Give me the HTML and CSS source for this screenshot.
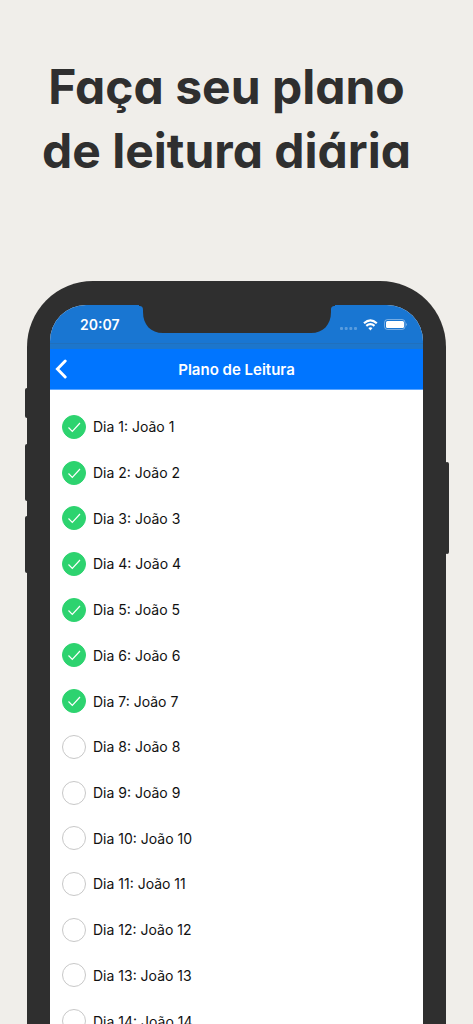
FILE: index.html
```html
<!DOCTYPE html>
<html lang="pt-BR">
<head>
<meta charset="utf-8">
<meta name="viewport" content="width=device-width, initial-scale=1">
<title>Plano de Leitura</title>
<link rel="stylesheet" href="styles.css">
</head>
<body>
<main class="page">
  <h1 class="headline">Faça seu plano<br>de leitura diária</h1>
  <section class="phone">
    <span class="key key-mute"></span>
    <span class="key key-up"></span>
    <span class="key key-down"></span>
    <span class="key key-power"></span>
    <div class="screen">
      <div class="status">
        <span class="time">20:07</span>
        <svg class="notch" viewBox="0 0 196 28" aria-hidden="true"><path d="M0 0H196V1C193 1 192 2 192 5V7C192 20 184 28 172 28H24C12 28 4 20 4 7V5C4 2 3 1 0 1Z" fill="#2f2f2f"/></svg>
        <svg class="signals" viewBox="0 0 68 12" aria-hidden="true">
          <g fill="#fff" fill-opacity=".28"><rect x="0" y="8" width="3" height="3" rx="1"/><rect x="4.700" y="8" width="3" height="3" rx="1"/><rect x="9.300" y="8" width="3" height="3" rx="1"/><rect x="14" y="8" width="3" height="3" rx="1"/></g>
          <g fill="none" stroke="#fff" stroke-width="2.200"><path d="M24 4.200Q30.400 -1.600 36.800 4.200"/><path d="M26.300 6.900Q30.400 3.300 34.500 6.900"/></g>
          <path d="M28.300 9.100Q30.400 7.400 32.500 9.100L30.400 11.400Z" fill="#fff"/>
          <rect x="44.500" y=".5" width="20.500" height="10" rx="3" fill="none" stroke="#fff" stroke-opacity=".4"/>
          <rect x="46" y="2" width="18" height="7" rx="1.500" fill="#fff"/>
          <path d="M66.200 3.800Q68 5.500 66.200 7.200Z" fill="#fff" fill-opacity=".5"/>
        </svg>
      </div>
      <header class="bar">
        <button class="back" type="button" aria-label="Voltar"><svg viewBox="0 0 12 20" aria-hidden="true"><path d="M10.200 2L2.400 10L10.200 18" fill="none" stroke="#fff" stroke-width="2.900" stroke-linecap="round"/></svg></button>
        <h2 class="title">Plano de Leitura</h2>
      </header>
      <ul class="days" id="days"></ul>
    </div>
  </section>
</main>
<script src="script.js"></script>
</body>
</html>
```
FILE: styles.css
```css
* { box-sizing: border-box; }

body {
  margin: 0;
  background: #f0eeea;
  font-family: Inter, "Liberation Sans", sans-serif;
}

.page {
  display: flex;
  flex-direction: column;
  height: 100vh;
  overflow: hidden;
}

.headline {
  flex: none;
  margin: 0;
  padding: 55px 20px 98px 0;
  color: #2f2f2f;
  font-family: "Comic Sans MS", Inter, sans-serif;
  font-feature-settings: "cv11";
  font-size: 48px;
  font-weight: 700;
  line-height: 64px;
  text-align: center;
  white-space: nowrap;
}

.phone {
  position: relative;
  flex: none;
  margin: 0 27px;
  padding: 24px 23px 0;
  border-radius: 66px 66px 0 0;
  background: #2f2f2f;
}

.key {
  position: absolute;
  left: -2px;
  width: 4px;
  border-radius: 2px;
  background: #2f2f2f;
}
.key-mute { top: 107px; height: 30px; }
.key-up { top: 163px; height: 57px; }
.key-down { top: 235px; height: 57px; }
.key-power { top: 181px; right: -3px; left: auto; height: 92px; }

.screen {
  overflow: hidden;
  border-radius: 36px 36px 0 0;
  background: #fff;
}

.status {
  position: relative;
  display: flex;
  align-items: center;
  justify-content: space-between;
  height: 44px;
  padding: 0 15px 0 30px;
  border-bottom: 5px solid #1c76cc;
  background: #1976d2;
  box-shadow: inset 0 -1px #2070bd;
}

.time {
  color: #fff;
  font-size: 14px;
  font-weight: 600;
}

.notch {
  position: absolute;
  top: 0;
  left: 50%;
  width: 196px;
  height: 28px;
  transform: translateX(-50%);
}

.signals {
  width: 68px;
  height: 12px;
}

.bar {
  display: grid;
  grid-template-columns: 24px 1fr 24px;
  align-items: center;
  height: 41px;
  border-bottom: 1px solid #5ba5ff;
  background: #0075ff;
}

.back {
  display: flex;
  padding: 0 0 0 5px;
  border: 0;
  background: none;
}
.back svg {
  width: 12px;
  height: 20px;
}

.title {
  margin: 0;
  color: #fff;
  font-size: 15px;
  font-weight: 600;
  text-align: center;
}

.days {
  display: grid;
  grid-auto-rows: 1fr;
  min-height: 654px;
  margin: 0;
  padding: 14px 12px 0;
  list-style: none;
}

.item {
  display: grid;
}

.day {
  display: grid;
  grid-template-columns: 24px 1fr;
  column-gap: 7px;
  align-items: center;
  color: #111;
  font-size: 14px;
}

.check {
  grid-area: 1 / 1;
  width: 24px;
  height: 24px;
  margin: 0;
  border: 1px solid #c8c8c8;
  border-radius: 50%;
  appearance: none;
  background: #fff;
}
.check:checked {
  border-color: #2dd36f;
  background: #2dd36f;
}

.tick {
  grid-area: 1 / 1;
  width: 24px;
  height: 24px;
  fill: none;
  stroke: #fff;
  stroke-width: 1.2;
  pointer-events: none;
}

.name {
  grid-area: 1 / 2;
}
```
FILE: script.js
```javascript
const days = document.getElementById("days");
for (let n = 1; n <= 14; n++) {
  const item = document.createElement("li");
  item.className = "item";
  item.innerHTML = `<label class="day"><input class="check" type="checkbox"${n <= 7 ? " checked" : ""}><svg class="tick" viewBox="0 0 24 24" aria-hidden="true"><path d="M6.500 12.500L10.300 16.300L18 8"/></svg><span class="name">Dia ${n}: João ${n}</span></label>`;
  days.append(item);
}
```
